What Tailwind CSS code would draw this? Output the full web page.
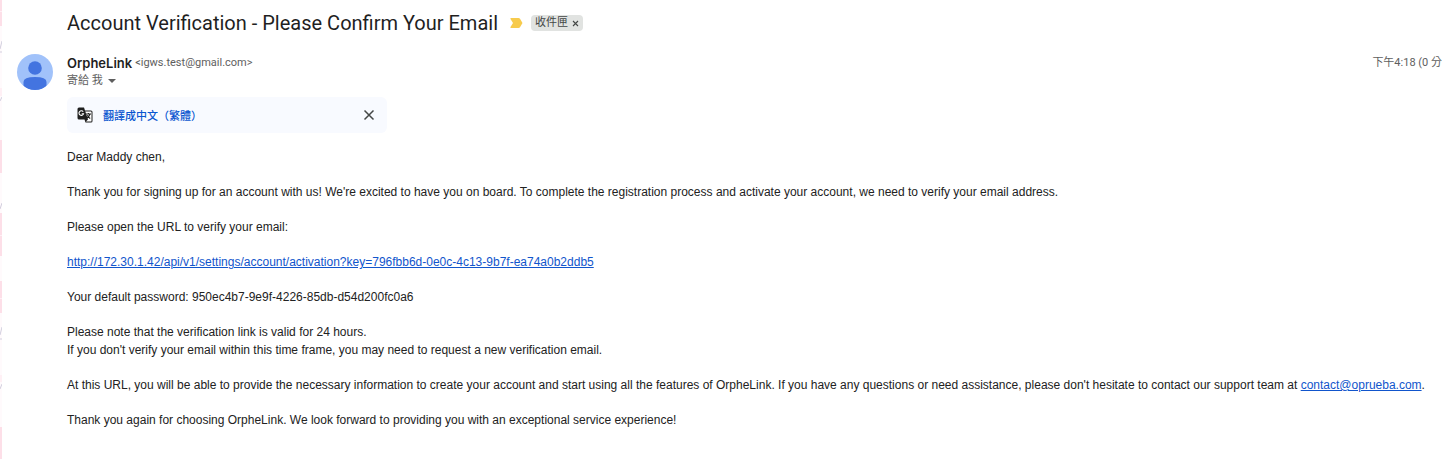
<!DOCTYPE html>
<html lang="zh-Hant">

<head>
    <meta charset="UTF-8">
    <meta name="viewport" content="width=device-width, initial-scale=1.0">
    <title>Account Verification - Please Confirm Your Email</title>
    <script src="https://cdn.jsdelivr.net/npm/@tailwindcss/browser@4"></script>
</head>

<body class="flex min-h-screen overflow-hidden bg-white font-['Roboto','Noto_Sans_CJK_TC',sans-serif] text-[#1f1f1f]">
    <!-- 背景主題邊緣 -->
    <div class="w-0.5 shrink-0 bg-[#fffafc]">
        <svg class="block" width="2" height="459" viewBox="0 0 2 459" aria-hidden="true">
            <path fill="#fddfe8" d="M0 0h2v26H0zM0 140h2v33H0zM0 213h2v43H0zM0 281h2v32H0zM0 427h2v32H0z" />
            <path fill="#fff0f5" d="M0 11h2v1H0zM0 88h2v8H0zM0 235h2v1H0zM0 298h2v1H0zM0 375h2v7H0z" />
            <path fill="none" stroke="#d3d0df" d="M0 49L2 41M0 52h2M0 101L2 97M0 209L2 203M0 335L2 327M0 339h2M0 389L2 384" />
        </svg>
    </div>

    <main class="min-w-0 flex-1 pl-[15px]">
        <!-- 主旨 -->
        <header class="flex h-[46px] items-center pl-[50px]">
            <h1 class="whitespace-nowrap text-[20px] leading-6">Account Verification - Please Confirm Your Email</h1>
            <svg class="ml-3 shrink-0" width="13" height="10" viewBox="0 0 13 10" aria-label="重要">
                <path fill="#f7cb4d" d="M1 0h7.5Q9.5 0 10 .8L12.5 5 10 9.2q-.5.8-1.5.8H1Q0 10 .5 9L3 5 .5 1Q0 0 1 0z" />
            </svg>
            <div class="ml-2 flex h-4 items-center gap-1 rounded bg-[#e1e3e1] px-1 text-[11px] text-[#444746]">
                <span class="leading-4">收件匣</span>
                <button class="flex" aria-label="移除標籤">
                    <svg width="7" height="7" viewBox="0 0 7 7" fill="none" stroke="#444746" stroke-width="1.1">
                        <path d="M1 1l5 5M6 1L1 6" />
                    </svg>
                </button>
            </div>
        </header>

        <!-- 寄件者 -->
        <section class="flex pt-2">
            <svg class="shrink-0" width="36" height="36" viewBox="0 0 36 36" aria-hidden="true">
                <clipPath id="avatar">
                    <circle cx="18" cy="18" r="18" />
                </clipPath>
                <g clip-path="url(#avatar)">
                    <path fill="#a1c2fa" d="M0 0h36v36H0z" />
                    <circle cx="18" cy="14" r="6.8" fill="#4374e0" />
                    <path fill="#4374e0" d="M6.500 32V28q0-5 11.500-5t11.500 5v4c-3 3-7 4.500-11.500 4.500S9.500 35 6.500 32z" />
                </g>
            </svg>
            <div class="min-w-0 flex-1 pl-[14px] text-[11px] text-[#5e5e5e]">
                <div class="flex items-center justify-between leading-[18px]">
                    <p class="flex items-center gap-[3px] whitespace-nowrap">
                        <span class="font-['Inter',sans-serif] text-[13px] font-semibold text-[#1f1f1f]">OrpheLink</span>
                        <span>&lt;igws.test@gmail.com&gt;</span>
                    </p>
                    <time class="whitespace-nowrap">下午4:18 (0 分</time>
                </div>
                <button class="flex items-center gap-[5px] leading-[18px]">
                    寄給 我
                    <svg width="8" height="4" viewBox="0 0 8 4" aria-hidden="true">
                        <path fill="#5e5e5e" d="M0 0h8L4 4z" />
                    </svg>
                </button>
            </div>
        </section>

        <div class="pl-[50px]">
            <!-- 翻譯列 -->
            <div class="mt-[7px] flex h-9 w-80 items-center rounded-md bg-[#f8faff] pr-3 pl-2.5">
                <svg width="16" height="16" viewBox="0 0 16 16" aria-hidden="true">
                    <path fill="#1f1f1f" d="M2 .5h5l1 3h6q1.500 0 1.500 1.500v9q0 1.500-1.500 1.500H8.500l-1-3H2Q.5 12.500.5 11V2Q.5.5 2 .5z" />
                    <path fill="#fff" d="M8.300 4.600H14q.5 0 .5.500v9q0 .5-.5.500H9l2-2.100z" />
                    <path fill="none" stroke="#fff" stroke-width="1.100" d="M6.200 4.800a2.300 2.300 0 1 0 .3 2H4.700" />
                    <path fill="none" stroke="#1f1f1f" stroke-width="1.100" d="M9 7h5M11.400 6v1M13 7q-.8 2.500-3 4M10.300 8.200q1 2 2.900 3.300" />
                </svg>
                <a href="#" class="ml-[10px] font-['Noto_Sans_CJK_TC',sans-serif] text-[11px] leading-4 font-medium text-[#0b57d0]">翻譯成中文（繁體）</a>
                <button class="ml-auto flex" aria-label="關閉">
                    <svg width="12" height="12" viewBox="0 0 12 12" fill="none" stroke="#444746" stroke-width="1.500">
                        <path d="M1.500 1.500l9 9M10.500 1.500l-9 9" />
                    </svg>
                </button>
            </div>

            <!-- 郵件內文 -->
            <article class="mt-[15px] flex flex-col gap-[17px] font-['Liberation_Sans',Arial,sans-serif] text-[12px] leading-[18px] text-[#222222]">
                <p>Dear Maddy chen,</p>
                <p>Thank you for signing up for an account with us! We're excited to have you on board. To complete the registration process and activate your account, we need to verify your email address.</p>
                <p>Please open the URL to verify your email:</p>
                <p><a class="text-[#1155cc] underline" href="http://172.30.1.42/api/v1/settings/account/activation?key=796fbb6d-0e0c-4c13-9b7f-ea74a0b2ddb5">http://172.30.1.42/api/v1/settings/account/activation?key=796fbb6d-0e0c-4c13-9b7f-ea74a0b2ddb5</a></p>
                <p>Your default password: 950ec4b7-9e9f-4226-85db-d54d200fc0a6</p>
                <p>Please note that the verification link is valid for 24 hours.<br>If you don't verify your email within this time frame, you may need to request a new verification email.</p>
                <p>At this URL, you will be able to provide the necessary information to create your account and start using all the features of OrpheLink. If you have any questions or need assistance, please don't hesitate to contact our support team at <a class="text-[#1155cc] underline" href="mailto:contact@oprueba.com">contact@oprueba.com</a>.</p>
                <p>Thank you again for choosing OrpheLink. We look forward to providing you with an exceptional service experience!</p>
            </article>
        </div>
    </main>
</body>

</html>
